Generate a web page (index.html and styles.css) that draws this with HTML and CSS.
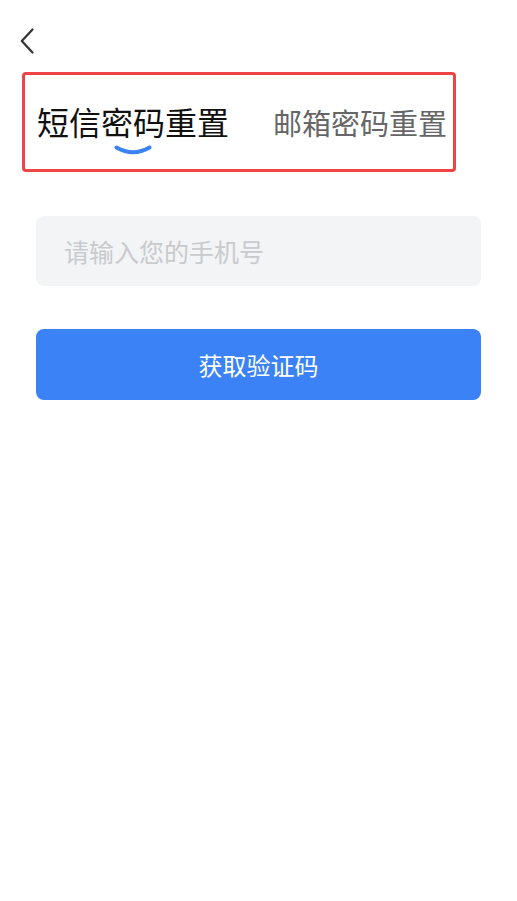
FILE: index.html
```html
<!DOCTYPE html>
<html lang="zh-CN">
<head>
<meta charset="utf-8">
<title>重置密码</title>
<link rel="stylesheet" href="styles.css">
</head>
<body>
<div class="page">
  <header class="topbar">
    <button class="back" aria-label="返回">
      <svg width="14" height="26" viewBox="0 0 14 26"><path d="M12.5 1.5 L1.8 13 L12.5 24.5" fill="none" stroke="#333" stroke-width="2.2" stroke-linecap="round" stroke-linejoin="round"/></svg>
    </button>
  </header>
  <nav class="tabs">
    <div class="tab active">短信密码重置
      <svg class="smile" width="38" height="10" viewBox="0 0 38 10"><path d="M2.5 2.5 Q19 12 35.5 2.5" fill="none" stroke="#3b82f6" stroke-width="4" stroke-linecap="round"/></svg>
    </div>
    <div class="tab">邮箱密码重置</div>
  </nav>
  <main class="form">
    <div class="field"><span class="placeholder">请输入您的手机号</span></div>
    <button class="submit">获取验证码</button>
  </main>
</div>
</body>
</html>
```
FILE: styles.css
```css
html, body {
  margin: 0;
  padding: 0;
  background: #ffffff;
}
body {
  font-family: "Noto Sans CJK SC", "Noto Sans", sans-serif;
  width: 517px;
  height: 901px;
}
.topbar {
  height: 72px;
  display: flex;
  align-items: flex-start;
  padding-left: 20px;
  box-sizing: border-box;
}
.back {
  margin-top: 28px;
  border: 0;
  background: none;
  padding: 0;
  width: 14px;
  height: 26px;
  display: block;
}
.back svg { display: block; }
.tabs {
  margin-left: 22px;
  width: 434px;
  height: 100px;
  box-sizing: border-box;
  border: 3px solid #ef4444;
  border-radius: 4px;
  display: flex;
  align-items: center;
  justify-content: space-between;
  padding: 0 6px 0 12px;
}
.tab {
  position: relative;
  font-size: 29px;
  line-height: 40px;
  color: #666666;
  white-space: nowrap;
}
.tab.active {
  font-size: 32px;
  line-height: 44px;
  color: #111111;
  margin-top: -2px;
}
.smile {
  position: absolute;
  left: 50%;
  top: 100%;
  margin-left: -19px;
  margin-top: 2px;
  display: block;
}
.form {
  padding: 44px 36px 0;
  display: flex;
  flex-direction: column;
  gap: 43px;
}
.field {
  height: 70px;
  background: #f3f4f6;
  border-radius: 8px;
  display: flex;
  align-items: center;
  padding-left: 28px;
}
.placeholder {
  font-size: 25px;
  color: #c9cacd;
}
.submit {
  height: 71px;
  border: 0;
  border-radius: 8px;
  background: #3b82f6;
  color: #ffffff;
  font-family: inherit;
  font-size: 24px;
  padding: 0;
}
```
